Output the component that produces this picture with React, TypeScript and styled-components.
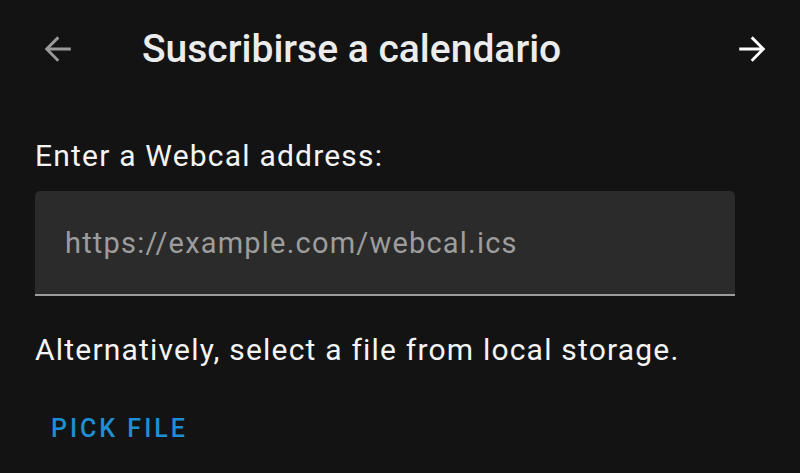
import React from "react";
import styled, { createGlobalStyle } from "styled-components";

const Global = createGlobalStyle`
  html, body { margin: 0; padding: 0; background: #131313; }
  body { font-family: Roboto, "Noto Sans", sans-serif; -webkit-font-smoothing: antialiased; }
`;

const Screen = styled.div`
  width: 800px;
  height: 473px;
  background: #131313;
  color: #f1f1f1;
  overflow: hidden;
  display: flex;
  flex-direction: column;
`;

const Header = styled.header`
  height: 98px;
  display: flex;
  align-items: center;
  padding: 0 31px 0 40px;
`;

const IconButton = styled.button<{ $color: string }>`
  width: 35px;
  height: 35px;
  padding: 0;
  border: 0;
  background: transparent;
  color: ${(p) => p.$color};
  display: flex;
  align-items: center;
  justify-content: center;
`;

const Title = styled.h1`
  flex: 1;
  margin: 0 0 0 67px;
  font-size: 39px;
  font-weight: 500;
  color: #ececec;
  line-height: 1;
  letter-spacing: 0;
`;

const Content = styled.main`
  padding: 40px 65px 0 35px;
  display: flex;
  flex-direction: column;
`;

const Label = styled.p`
  margin: 0;
  font-size: 30px;
  line-height: 36px;
  color: #f4f4f4;
  letter-spacing: 1.2px;
`;

const Field = styled.div`
  margin-top: 17px;
  height: 103px;
  background: #2b2b2b;
  border-radius: 5px 5px 0 0;
  border-bottom: 2px solid #9c9c9c;
  display: flex;
  align-items: center;
  padding: 0 30px;
`;

const Placeholder = styled.span`
  font-size: 29px;
  color: #9d9d9d;
  letter-spacing: 1.2px;
`;

const Hint = styled(Label)`
  margin-top: 36px;
`;

const TextButton = styled.button`
  align-self: flex-start;
  margin-top: 47px;
  margin-left: 16px;
  padding: 0;
  border: 0;
  background: transparent;
  font-family: Roboto, sans-serif;
  font-size: 25px;
  font-weight: 500;
  letter-spacing: 3px;
  color: #1e8fd5;
  line-height: 28px;
`;

const Arrow = ({ dir }: { dir: "left" | "right" }) => (
  <svg width="34" height="34" viewBox="0 0 24 24" fill="none" stroke="currentColor" strokeWidth="2" strokeLinecap="square" strokeLinejoin="miter">
    {dir === "left" ? (
      <path d="M20 12H4.5M11.5 4.5 4 12l7.5 7.5" />
    ) : (
      <path d="M4 12h15.5M12.5 4.5 20 12l-7.5 7.5" />
    )}
  </svg>
);

export default function App() {
  return (
    <>
      <Global />
      <Screen>
        <Header>
          <IconButton $color="#9a9a9a" aria-label="Back">
            <Arrow dir="left" />
          </IconButton>
          <Title>Suscribirse a calendario</Title>
          <IconButton $color="#ffffff" aria-label="Next">
            <Arrow dir="right" />
          </IconButton>
        </Header>
        <Content>
          <Label>Enter a Webcal address:</Label>
          <Field>
            <Placeholder>https://example.com/webcal.ics</Placeholder>
          </Field>
          <Hint>Alternatively, select a file from local storage.</Hint>
          <TextButton>PICK FILE</TextButton>
        </Content>
      </Screen>
    </>
  );
}
